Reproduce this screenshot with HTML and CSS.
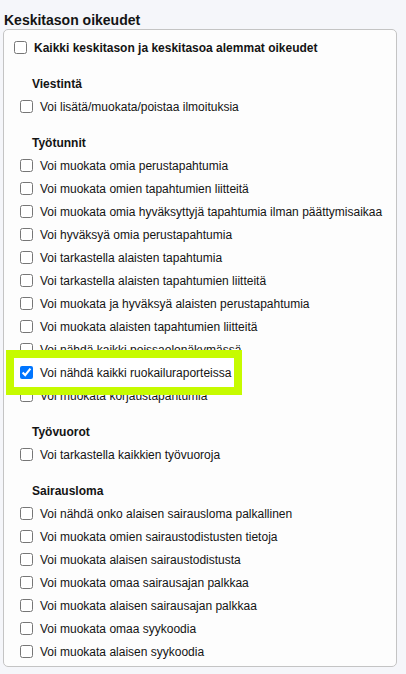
FILE: index.html
```html
<!DOCTYPE html>
<html lang="fi">
<head>
<meta charset="utf-8">
<title>Keskitason oikeudet</title>
<link rel="stylesheet" href="styles.css">
</head>
<body>
<div class="page">
  <h2 class="title">Keskitason oikeudet</h2>
  <div class="card">
    <label class="row all"><input type="checkbox"><span>Kaikki keskitason ja keskitasoa alemmat oikeudet</span></label>

    <section class="group">
      <h3 class="group-title">Viestintä</h3>
      <label class="row"><input type="checkbox"><span>Voi lisätä/muokata/poistaa ilmoituksia</span></label>
    </section>

    <section class="group">
      <h3 class="group-title">Työtunnit</h3>
      <label class="row"><input type="checkbox"><span>Voi muokata omia perustapahtumia</span></label>
      <label class="row"><input type="checkbox"><span>Voi muokata omien tapahtumien liitteitä</span></label>
      <label class="row"><input type="checkbox"><span>Voi muokata omia hyväksyttyjä tapahtumia ilman päättymisaikaa</span></label>
      <label class="row"><input type="checkbox"><span>Voi hyväksyä omia perustapahtumia</span></label>
      <label class="row"><input type="checkbox"><span>Voi tarkastella alaisten tapahtumia</span></label>
      <label class="row"><input type="checkbox"><span>Voi tarkastella alaisten tapahtumien liitteitä</span></label>
      <label class="row"><input type="checkbox"><span>Voi muokata ja hyväksyä alaisten perustapahtumia</span></label>
      <label class="row"><input type="checkbox"><span>Voi muokata alaisten tapahtumien liitteitä</span></label>
      <label class="row"><input type="checkbox"><span>Voi nähdä kaikki poissaolonäkymässä</span></label>
      <label class="row highlight"><input type="checkbox" checked><span>Voi nähdä kaikki ruokailuraporteissa</span></label>
      <label class="row"><input type="checkbox"><span>Voi muokata korjaustapahtumia</span></label>
    </section>

    <section class="group">
      <h3 class="group-title">Työvuorot</h3>
      <label class="row"><input type="checkbox"><span>Voi tarkastella kaikkien työvuoroja</span></label>
    </section>

    <section class="group">
      <h3 class="group-title">Sairausloma</h3>
      <label class="row"><input type="checkbox"><span>Voi nähdä onko alaisen sairausloma palkallinen</span></label>
      <label class="row"><input type="checkbox"><span>Voi muokata omien sairaustodistusten tietoja</span></label>
      <label class="row"><input type="checkbox"><span>Voi muokata alaisen sairaustodistusta</span></label>
      <label class="row"><input type="checkbox"><span>Voi muokata omaa sairausajan palkkaa</span></label>
      <label class="row"><input type="checkbox"><span>Voi muokata alaisen sairausajan palkkaa</span></label>
      <label class="row"><input type="checkbox"><span>Voi muokata omaa syykoodia</span></label>
      <label class="row"><input type="checkbox"><span>Voi muokata alaisen syykoodia</span></label>
    </section>
  </div>
</div>
</body>
</html>
```

FILE: styles.css
```css
*, *::before, *::after {
  box-sizing: border-box;
}

html, body {
  margin: 0;
  padding: 0;
  background: #f5f6fa;
}

body {
  font-family: "Liberation Sans", Arial, sans-serif;
  font-size: 12px;
  color: #141414;
}

.page {
  padding: 12px 0 0 3px;
}

.title {
  margin: 0 0 1px 1px;
  font-size: 14px;
  font-weight: bold;
  line-height: 16px;
}

.card {
  width: 394px;
  height: 638px;
  border: 1px solid #c4c4c4;
  border-radius: 5px;
  background: #fdfdfd;
  padding: 6px 0 0 0;
}

.row {
  display: flex;
  align-items: center;
  gap: 7px;
  height: 23px;
  padding-left: 16px;
  line-height: 14px;
}

.row input {
  margin: 0;
  width: 13px;
  height: 13px;
  flex: none;
}

.row.all {
  padding-left: 10px;
  font-weight: bold;
}

.group {
  margin-top: 14px;
}

.group-title {
  margin: 0;
  height: 22px;
  display: flex;
  align-items: center;
  padding-left: 28px;
  font-size: 12px;
  font-weight: bold;
}

.row.highlight {
  position: relative;
  z-index: 1;
}

.row.highlight::before {
  content: "";
  position: absolute;
  left: 2px;
  top: -11px;
  width: 236px;
  height: 45px;
  border: 8px solid #c6fb00;
  background: #ffffff;
  z-index: -1;
}
```
